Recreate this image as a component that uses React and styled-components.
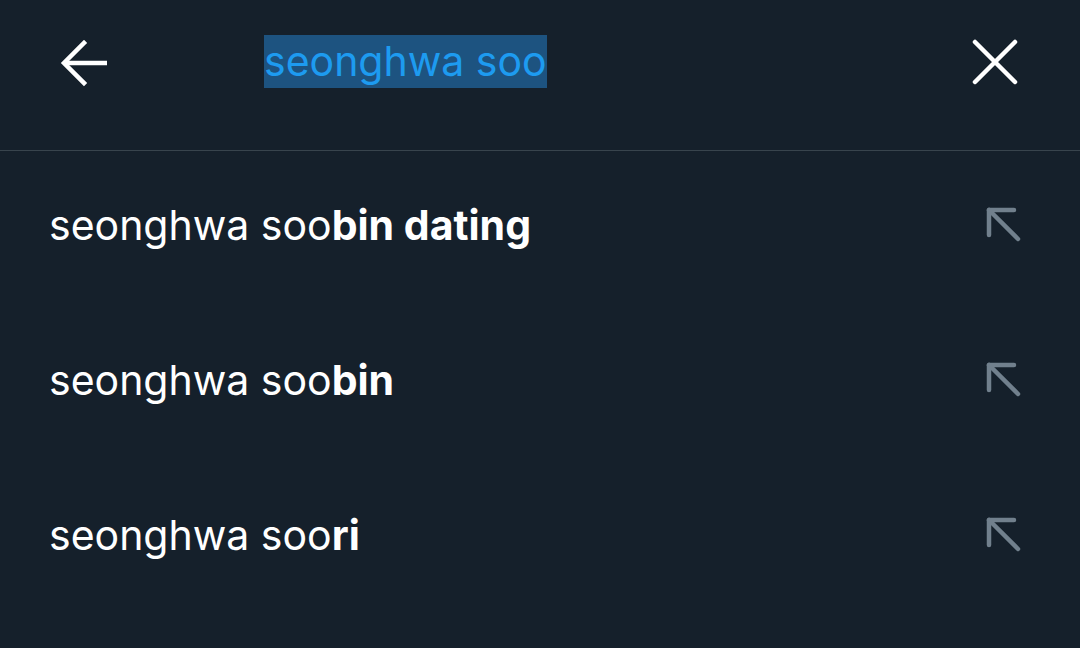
import React from "react";
import styled, { createGlobalStyle } from "styled-components";

const Global = createGlobalStyle`
  html, body { margin: 0; padding: 0; background: #15202b; }
  body { font-family: Inter, "Noto Sans", sans-serif; }
`;

const Page = styled.div`
  width: 1080px;
  height: 648px;
  background: #15202b;
  overflow: hidden;
`;

const Header = styled.header`
  height: 151px;
  box-sizing: border-box;
  border-bottom: 1px solid #38444d;
  display: flex;
  align-items: flex-start;
  padding: 35px 52px 0 52px;
`;

const IconButton = styled.button`
  width: 64px;
  height: 55px;
  padding: 0;
  background: none;
  border: none;
  display: flex;
  align-items: center;
  justify-content: center;
  color: #fff;
`;

const SearchArea = styled.div`
  flex: 1;
  padding-left: 148px;
  height: 53px;
  display: flex;
`;

const Selected = styled.span`
  display: inline-block;
  background: #1d5380;
  color: #1d9bf0;
  font-size: 41px;
  line-height: 53px;
  height: 53px;
  white-space: nowrap;
`;

const List = styled.ul`
  list-style: none;
  margin: 0;
  padding: 0;
`;

const Row = styled.li`
  height: 155px;
  box-sizing: border-box;
  display: flex;
  align-items: center;
  justify-content: space-between;
  padding: 0 58px 8px 49px;
`;

const Suggestion = styled.span`
  color: #fff;
  font-size: 41px;
  white-space: nowrap;
`;

const Bold = styled.b`
  font-weight: 700;
`;

const Back = () => (
  <svg width="50" height="48" viewBox="0 0 50 48" fill="none" stroke="#fff" strokeWidth="4.5">
    <path d="M48 24H6" />
    <path d="M25 4L5 24l20 20" strokeLinecap="square" />
  </svg>
);

const Close = () => (
  <svg width="48" height="48" viewBox="0 0 48 48" fill="none" stroke="#fff" strokeWidth="4.5" strokeLinecap="round">
    <path d="M3 3L43 43M43 3L3 43" />
  </svg>
);

const Fill = () => (
  <svg width="36" height="36" viewBox="0 0 36 36" fill="none" stroke="#71808d" strokeWidth="4.5" strokeLinecap="round" strokeLinejoin="round">
    <path d="M3 28V3h25" />
    <path d="M3 3l29 29" />
  </svg>
);

const items = [
  ["seonghwa soo", "bin dating"],
  ["seonghwa soo", "bin"],
  ["seonghwa soo", "ri"],
];

export default function App() {
  return (
    <Page>
      <Global />
      <Header>
        <IconButton aria-label="Back">
          <Back />
        </IconButton>
        <SearchArea>
          <Selected>seonghwa soo</Selected>
        </SearchArea>
        <IconButton aria-label="Clear">
          <Close />
        </IconButton>
      </Header>
      <List>
        {items.map(([a, b]) => (
          <Row key={b}>
            <Suggestion>
              {a}
              <Bold>{b}</Bold>
            </Suggestion>
            <Fill />
          </Row>
        ))}
      </List>
    </Page>
  );
}
